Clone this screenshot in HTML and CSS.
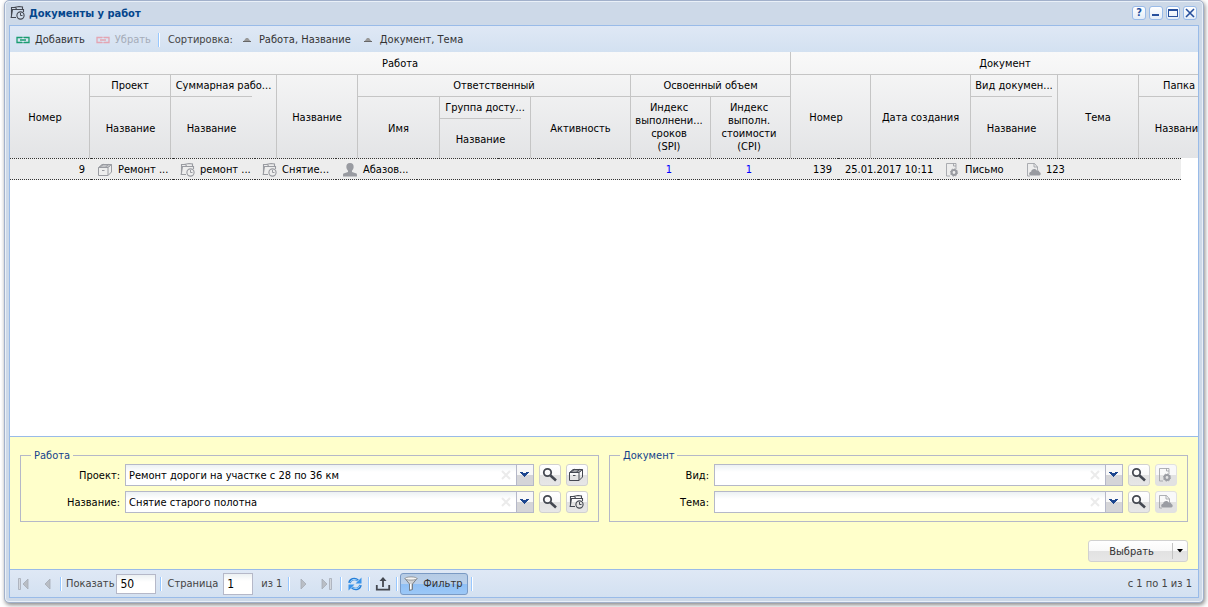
FILE: index.html
```html
<!DOCTYPE html>
<html lang="ru">
<head>
<meta charset="utf-8">
<title>Документы у работ</title>
<link rel="stylesheet" href="styles.css">
</head>
<body>
<svg class="sprite" aria-hidden="true">
  <symbol id="i-task" viewBox="0 0 16 16"><path d="M6 12.500H1.200L2.500 4.500H13.500V7M1.500 11V2.500H5.500L6.500 4M4 2.500 9 1.500 12.500 2V4" fill="none" stroke="currentColor" stroke-width="1.100"/><circle cx="10.500" cy="10.500" r="3.600" fill="none" stroke="currentColor" stroke-width="1.100"/><path d="M10.500 8v2.500h2" fill="none" stroke="currentColor"/></symbol>
  <symbol id="i-box" viewBox="0 0 16 16"><path d="M.5 5.500h9.500v8H.5zM.5 5.500 4 2.500h9.500L10 5.500M13.500 2.500v7.500L10 13.500M3 4h9M2 5l4-3M7.500 5 11 2M4 8.500h2.500" fill="none" stroke="currentColor"/></symbol>
  <symbol id="i-user" viewBox="0 0 16 16"><path fill="currentColor" d="M7 1c2.700 0 4 1.900 3.600 4.500-.2 1.500-.8 2.400-1.600 3.200v1.200l4.500 1.700c.5.300.5 1.400.5 2.900H0c0-1.500 0-2.600.5-2.900L5 9.900V8.700C4.200 7.900 3.600 7 3.400 5.500 3 2.900 4.300 1 7 1z"/></symbol>
  <symbol id="i-doctype" viewBox="0 0 16 16"><path d="M5 14H1.500V1.500H11V7M8.500 1.500V4H11" fill="none" stroke="currentColor" opacity=".8"/><circle cx="9" cy="10.500" r="2.400" fill="none" stroke="currentColor" stroke-width="2"/><circle cx="9" cy="10.500" r="3.600" fill="none" stroke="currentColor" stroke-width="1" stroke-dasharray="1.400 1.400"/></symbol>
  <symbol id="i-doccloud" viewBox="0 0 16 16"><path d="M4 14H1.500V1.500h7L11.500 5v3M8 1.500V5h3.500" fill="none" stroke="currentColor" opacity=".8"/><path fill="currentColor" d="M5.500 13.500c-3 0-3-3.500-.4-3.800C5.500 7 9 6 10.700 8.500c1.500-.5 2.500.4 2.600 1.500 1.900.2 1.800 3.500 0 3.500z"/></symbol>
  <symbol id="i-link" viewBox="0 0 14 8"><path d="M6 2V1.500H1v5h5V6M8 2V1.500h5v5H8V6M4 4h6" fill="none" stroke="currentColor" stroke-width="1.300"/></symbol>
  <symbol id="i-search" viewBox="0 0 16 16"><circle cx="5.500" cy="5.500" r="3.700" fill="none" stroke="currentColor" stroke-width="1.800"/><path d="m8.500 8.500 5.500 5" stroke="currentColor" stroke-width="2.600"/></symbol>
  <symbol id="i-sort" viewBox="0 0 8 6"><path d="M3 1h2l3 4H0z" fill="#999"/><path d="M0 4.500h8" fill="none" stroke="#666"/></symbol>
  <symbol id="i-play" viewBox="0 0 7 12"><path d="M1 1v10l5-5z" fill="#b9bec5" stroke="#a4abb5" stroke-width=".8"/></symbol>
  <symbol id="i-last" viewBox="0 0 12 12"><path d="M1 1v10l5-5z" fill="#b9bec5" stroke="#a4abb5" stroke-width=".8"/><path d="M8.500.5h2v11h-2z" fill="#d2d7de" stroke="#a4abb5" stroke-width=".8"/></symbol>
  <symbol id="i-down" viewBox="0 0 9 6"><path d="M0 0h3v1h3V0h3v1H8v1H7v1H6v1H5v1H4V4H3V3H2V2H1V1H0z" fill="#1d468f"/></symbol>
  <symbol id="i-clear" viewBox="0 0 10 10"><path d="m1 1 8 8M9 1 1 9" stroke="#ebebeb" stroke-width="2"/></symbol>
</svg>
<main class="window">
  <header class="titlebar">
    <svg class="icon title-icon"><use href="#i-task"/></svg>
    <h1>Документы у работ</h1>
    <div class="tools">
      <button class="tool" aria-label="Справка">?</button>
      <button class="tool" aria-label="Свернуть"><svg viewBox="0 0 12 12"><path d="M2 7h7v2H2z" fill="#264f9c"/></svg></button>
      <button class="tool" aria-label="Развернуть"><svg viewBox="0 0 12 12"><path d="M1 2h10v8H1zm1 2v5h8V4z" fill="#264f9c" fill-rule="evenodd"/></svg></button>
      <button class="tool" aria-label="Закрыть"><svg viewBox="0 0 12 12"><path d="m2 2 8 8M10 2l-8 8" stroke="#264f9c" stroke-width="1.600"/></svg></button>
    </div>
  </header>
  <div class="frame">
    <div class="toolbar">
      <button class="action"><svg class="link-icon add"><use href="#i-link"/></svg>Добавить</button>
      <button class="action" disabled><svg class="link-icon remove"><use href="#i-link"/></svg>Убрать</button>
      <span class="sep"></span>
      <span class="sort-label">Сортировка:</span>
      <button class="action sort"><svg class="sort-icon"><use href="#i-sort"/></svg>Работа, Название</button>
      <button class="action sort"><svg class="sort-icon"><use href="#i-sort"/></svg>Документ, Тема</button>
    </div>
    <div class="grid">
      <table class="head">
        <colgroup><col class="w80"><col class="w81"><col class="w106"><col class="w81"><col class="w82"><col class="w91"><col class="w100"><col class="w80"><col class="w80"><col class="w80"><col class="w100"><col class="w87"><col class="w81"><col class="w81"></colgroup>
        <thead>
          <tr class="r1"><th colspan="9">Работа</th><th colspan="5">Документ</th></tr>
          <tr class="r2"><th rowspan="3"><div class="shift">Номер</div></th><th class="open">Проект</th><th class="open">Суммарная рабо...</th><th rowspan="3">Название</th><th colspan="3">Ответственный</th><th colspan="2">Освоенный объем</th><th rowspan="3"><div class="shift">Номер</div></th><th rowspan="3">Дата создания</th><th class="open">Вид докумен...</th><th rowspan="3">Тема</th><th class="open">Папка</th></tr>
          <tr class="r3"><th rowspan="2" class="sub"><div class="leaf">Название</div></th><th rowspan="2" class="sub"><div class="leaf">Название</div></th><th rowspan="2">Имя</th><th class="open">Группа досту...</th><th rowspan="2">Активность</th><th rowspan="2" class="multi">Индекс<br>выполнени...<br>сроков<br>(SPI)</th><th rowspan="2" class="multi">Индекс<br>выполн.<br>стоимости<br>(CPI)</th><th rowspan="2" class="sub"><div class="leaf">Название</div></th><th rowspan="2" class="sub"><div class="leaf">Название</div></th></tr>
          <tr class="r4"><th class="sub"><div class="leaf short">Название</div></th></tr>
        </thead>
      </table>
      <table class="rows">
        <colgroup><col class="w81"><col class="w82"><col class="w82"><col class="w81"><col class="w81"><col class="w81"><col class="w100"><col class="w80"><col class="w80"><col class="w80"><col class="w100"><col class="w81"><col class="w81"><col class="w81"></colgroup>
        <tbody>
          <tr>
            <td class="num">9</td>
            <td><div class="cell"><svg class="icon"><use href="#i-box"/></svg>Ремонт ...</div></td>
            <td><div class="cell"><svg class="icon"><use href="#i-task"/></svg>ремонт ...</div></td>
            <td><div class="cell"><svg class="icon"><use href="#i-task"/></svg>Снятие...</div></td>
            <td><div class="cell"><svg class="icon"><use href="#i-user"/></svg>Абазов...</div></td>
            <td></td><td></td>
            <td class="num blue">1</td><td class="num blue">1</td>
            <td class="num">139</td><td>25.01.2017 10:11</td>
            <td><div class="cell"><svg class="icon"><use href="#i-doctype"/></svg>Письмо</div></td>
            <td><div class="cell"><svg class="icon"><use href="#i-doccloud"/></svg>123</div></td>
            <td></td>
          </tr>
        </tbody>
      </table>
    </div>
    <form class="filter">
      <div class="sets">
        <fieldset>
          <legend>Работа</legend>
          <div class="field"><label for="f1">Проект:</label><div class="combo"><input id="f1" value="Ремонт дороги на участке с 28 по 36 км"><button type="button" class="clear" aria-label="Очистить"><svg><use href="#i-clear"/></svg></button><button type="button" class="trigger" aria-label="Открыть список"><svg><use href="#i-down"/></svg></button></div><button type="button" class="square" aria-label="Найти"><svg class="icon"><use href="#i-search"/></svg></button><button type="button" class="square" aria-label="Проект"><svg class="icon"><use href="#i-box"/></svg></button></div>
          <div class="field"><label for="f2">Название:</label><div class="combo"><input id="f2" value="Снятие старого полотна"><button type="button" class="clear" aria-label="Очистить"><svg><use href="#i-clear"/></svg></button><button type="button" class="trigger" aria-label="Открыть список"><svg><use href="#i-down"/></svg></button></div><button type="button" class="square" aria-label="Найти"><svg class="icon"><use href="#i-search"/></svg></button><button type="button" class="square" aria-label="Работа"><svg class="icon"><use href="#i-task"/></svg></button></div>
        </fieldset>
        <fieldset>
          <legend>Документ</legend>
          <div class="field"><label for="f3">Вид:</label><div class="combo"><input id="f3"><button type="button" class="clear" aria-label="Очистить"><svg><use href="#i-clear"/></svg></button><button type="button" class="trigger" aria-label="Открыть список"><svg><use href="#i-down"/></svg></button></div><button type="button" class="square" aria-label="Найти"><svg class="icon"><use href="#i-search"/></svg></button><button type="button" class="square" disabled aria-label="Вид"><svg class="icon"><use href="#i-doctype"/></svg></button></div>
          <div class="field"><label for="f4">Тема:</label><div class="combo"><input id="f4"><button type="button" class="clear" aria-label="Очистить"><svg><use href="#i-clear"/></svg></button><button type="button" class="trigger" aria-label="Открыть список"><svg><use href="#i-down"/></svg></button></div><button type="button" class="square" aria-label="Найти"><svg class="icon"><use href="#i-search"/></svg></button><button type="button" class="square" disabled aria-label="Документ"><svg class="icon"><use href="#i-doccloud"/></svg></button></div>
        </fieldset>
      </div>
      <div class="split">
        <button type="button" class="choose">Выбрать</button>
        <button type="button" class="more" aria-label="Ещё"><svg viewBox="0 0 6 4"><path d="M0 0h6L3 3.500z"/></svg></button>
      </div>
    </form>
    <footer class="pager">
      <button class="nav" disabled aria-label="Первая"><svg class="flip wide"><use href="#i-last"/></svg></button>
      <button class="nav" disabled aria-label="Предыдущая"><svg class="flip"><use href="#i-play"/></svg></button>
      <span class="sep"></span>
      <label for="size">Показать</label><input id="size" class="size" value="50">
      <span class="sep"></span>
      <label for="page" class="page-label">Страница</label><input id="page" class="page" value="1">
      <span class="total">из 1</span>
      <span class="sep"></span>
      <button class="nav" disabled aria-label="Следующая"><svg><use href="#i-play"/></svg></button>
      <button class="nav" disabled aria-label="Последняя"><svg class="wide"><use href="#i-last"/></svg></button>
      <span class="sep"></span>
      <button class="nav" aria-label="Обновить"><svg class="icon" viewBox="0 0 16 16"><path d="M2.500 7C3 3.500 7.500 1.500 11 4.500M13.500 9c-.5 3.500-5 5.500-8.500 2.500" fill="none" stroke="#267fd8" stroke-width="2.600"/><path d="M14.500 1.500v6h-6zM1.500 14.500v-6h6z" fill="#3a94ea"/><path d="M3 6.500C4 3.500 7.500 2.500 10.500 4.500M13 9.500c-1 3-4.500 4-7.500 2" fill="none" stroke="#a8d6fc" stroke-width="1"/></svg></button>
      <span class="sep"></span>
      <button class="nav" aria-label="Экспорт"><svg class="icon" viewBox="0 0 16 16"><path d="M1.800 9v4.700h12.400V9M8 11V3" fill="none" stroke="#444851" stroke-width="1.800"/><path d="M8 1 4.500 5h7z" fill="#444851"/></svg></button>
      <span class="sep"></span>
      <button class="pressed"><svg class="icon" viewBox="0 0 16 16"><path d="M2 2.500 6.500 8v6.500l3-1V8L14 2.500z" fill="#d0d3d6" stroke="#666b70" stroke-width=".8"/><path d="M7.500 8v5" stroke="#fff"/><ellipse cx="8" cy="2.500" rx="6" ry="1.600" fill="#f4f4f4" stroke="#85898c" stroke-width=".8"/></svg><span>Фильтр</span></button>
      <span class="sep"></span>
      <span class="status">с 1 по 1 из 1</span>
    </footer>
  </div>
</main>
</body>
</html>
```

FILE: styles.css
```css
* { box-sizing: border-box; }
body {
  margin: 0;
  background: #fff;
  color: #000;
  font: 11px/14px Tahoma, "DejaVu Sans Condensed", "Noto Sans", sans-serif;
}
button, input { font: inherit; margin: 0; }
button { padding: 0; border: 0; background: none; color: #333; }
svg { display: block; flex: none; }
.sprite { display: none; }
.icon { width: 16px; height: 16px; }

.window {
  display: flex;
  flex-direction: column;
  height: calc(100vh - 4px);
  min-height: 440px;
  margin: 0 4px 4px;
  padding: 0 4px 4px;
  background: #cdd9e8;
  border: 1px solid #a2b1cb;
  border-radius: 5px;
  box-shadow: inset 0 0 0 1px #e9f0f8, 1px 2px 4px #888;
}
.titlebar { display: flex; align-items: center; height: 24px; padding: 0 2px 0 1px; }
.title-icon { color: #444851; }
h1 { flex: 1; margin: 0 0 0 3px; padding-top: 2px; color: #04468c; font-size: 11px; line-height: 14px; font-weight: bold; }
.tools { display: flex; gap: 3px; }
.tool {
  display: flex;
  align-items: center;
  justify-content: center;
  width: 14px;
  height: 14px;
  border: 1px solid #99bbe8;
  border-radius: 3px;
  background: linear-gradient(#fff, #e3edf8);
  color: #264f9c;
  font-weight: bold;
}
.tool svg { width: 12px; height: 12px; }

.frame { display: flex; flex: 1; flex-direction: column; min-height: 0; border: 1px solid #99bbe8; background: #fff; }
.toolbar { display: flex; align-items: center; height: 26px; padding: 1px 6px 0; background: linear-gradient(#dfe8f5, #d3e1f1); }
.action { display: flex; align-items: center; }
.action + .action { margin-left: 11px; }
.action:disabled { color: #a5acb8; }
.link-icon { width: 14px; height: 8px; margin-right: 5px; }
.add { color: #199c70; }
.remove { color: #e4a5b2; }
.sep { flex: none; width: 2px; height: 14px; background: #98c8ff; border-right: 1px solid #fff; }
.toolbar .sep { margin: 0 8px 0 7px; }
.sort-label { margin-right: 10px; color: #444; }
.sort-icon { width: 8px; height: 6px; margin-right: 8px; }
.toolbar .sort + .sort { margin-left: 13px; }

.grid { flex: 1; min-height: 0; overflow: hidden; }
table { table-layout: fixed; border-collapse: separate; border-spacing: 0; }
.head { width: 1210px; background: linear-gradient(#f9f9f9, #e3e4e6); }
.rows { width: 1171px; background: #ededed; }
.w80 { width: 80px; }
.w81 { width: 81px; }
.w82 { width: 82px; }
.w87 { width: 87px; }
.w91 { width: 91px; }
.w100 { width: 100px; }
.w106 { width: 106px; }
th {
  padding: 0;
  border-right: 1px solid #c5c5c5;
  border-bottom: 1px solid #c5c5c5;
  font-weight: normal;
  line-height: 13px;
  white-space: nowrap;
}
.r1 { height: 23px; }
.r2, .r3 { height: 22px; }
.r4 { height: 39px; }
th[rowspan], th.open, th.sub { border-bottom: 0; }
th[rowspan] { padding-top: 2px; }
th.open { padding-bottom: 2px; }
th.multi { padding: 0 3px 1px 0; }
th.sub { padding: 0; vertical-align: top; }
.shift { padding-right: 9px; }
.leaf {
  display: flex;
  align-items: center;
  justify-content: center;
  width: 81px;
  height: 62px;
  padding-top: 2px;
  border-top: 1px solid #c5c5c5;
  margin-top: -1px;
}
.short { height: 40px; }
td { height: 22px; padding: 2px 0 0 7px; border-top: 1px dotted #333; border-bottom: 1px dotted #333; white-space: nowrap; }
td.num { padding: 2px 6px 0; text-align: right; }
.blue { color: #00f; }
.cell { display: flex; align-items: center; gap: 4px; height: 14px; }
.cell .icon { color: #999ba1; }

.filter { padding: 11px 10px 7px; border-top: 1px solid #99bbe8; background: #ffffcb; }
.sets { display: flex; gap: 10px; }
fieldset { flex: 1; min-width: 0; margin: 0; padding: 2px 10px 8px; border: 1px solid #b5b8c8; }
legend { height: 14px; padding: 1px 3px 0; color: #15428b; }
.field { display: flex; align-items: center; gap: 5px; }
.field + .field { margin-top: 5px; }
.field label { width: 89px; padding-top: 1px; text-align: right; }
.combo { display: flex; flex: 1; height: 22px; border: 1px solid #b5b8c8; background: linear-gradient(#ecf1f3, #fff 7px); }
.combo input { flex: 1; min-width: 0; padding: 2px 3px 0; border: 0; background: none; }
.clear { width: 20px; padding: 0 5px; }
.clear svg { width: 10px; height: 10px; }
.trigger { width: 17px; padding: 0 0 1px 3px; border-left: 1px solid #b5b8c8; background: linear-gradient(#f8f8f8 50%, #d5d5d8 50%); }
.trigger svg { width: 9px; height: 6px; }
.square, .split {
  display: flex;
  align-items: center;
  justify-content: center;
  height: 22px;
  border: 1px solid #d1d1d1;
  border-radius: 3px;
  background: linear-gradient(#fff, #f9f9f9 48%, #e2e2e2 52%, #e7e7e7);
}
.square { width: 22px; color: #444851; }
.square:disabled { border-color: #e1e1e1; background: linear-gradient(#f9f9f9 48%, #e2e2e2 52%); color: #9b9da3; }
.split { width: 100px; margin: 18px 0 0 auto; }
.choose { flex: 1; padding: 1px 0 0 2px; }
.more { width: 15px; height: 16px; padding: 0 4px; border-left: 1px solid #c3c3c3; }
.more svg { width: 6px; height: 4px; }

.pager { display: flex; align-items: center; height: 28px; padding: 0 6px 0 1px; border-top: 1px solid #99bbe8; background: linear-gradient(#dfe8f5, #d3e1f1); color: #444; }
.nav { display: flex; align-items: center; justify-content: center; width: 24px; height: 22px; }
.nav svg { width: 7px; height: 12px; }
.nav .wide { width: 12px; }
.nav .icon { width: 16px; height: 16px; }
.flip { transform: scaleX(-1); }
.pager input { padding: 1px 3px 0; border: 1px solid #b5b8c8; background: linear-gradient(#ecf1f3, #fff 7px); font-size: 12px; }
.pager label, .total, .status { padding-top: 1px; }
.pager label { margin: 0 2px 0 3px; }
.pager .sep { margin: 0 1px; }
.size { width: 40px; height: 20px; }
.pager .size + .sep { margin-left: 4px; }
.pager .page-label { margin: 0 5px 0 4px; }
.page { width: 30px; height: 22px; }
.total { margin: 0 5px 0 8px; }
.pressed {
  display: flex;
  align-items: center;
  gap: 4px;
  height: 22px;
  margin: 0 2px 0 1px;
  padding: 0 4px 0 2px;
  border: 1px solid #7a9ac4;
  border-radius: 3px;
  background: linear-gradient(#b6cbe4, #b9d0ec 48%, #90c0f5 52%, #9cc8f7);
}
.pressed span { padding-top: 1px; }
.status { margin-left: auto; }
```
